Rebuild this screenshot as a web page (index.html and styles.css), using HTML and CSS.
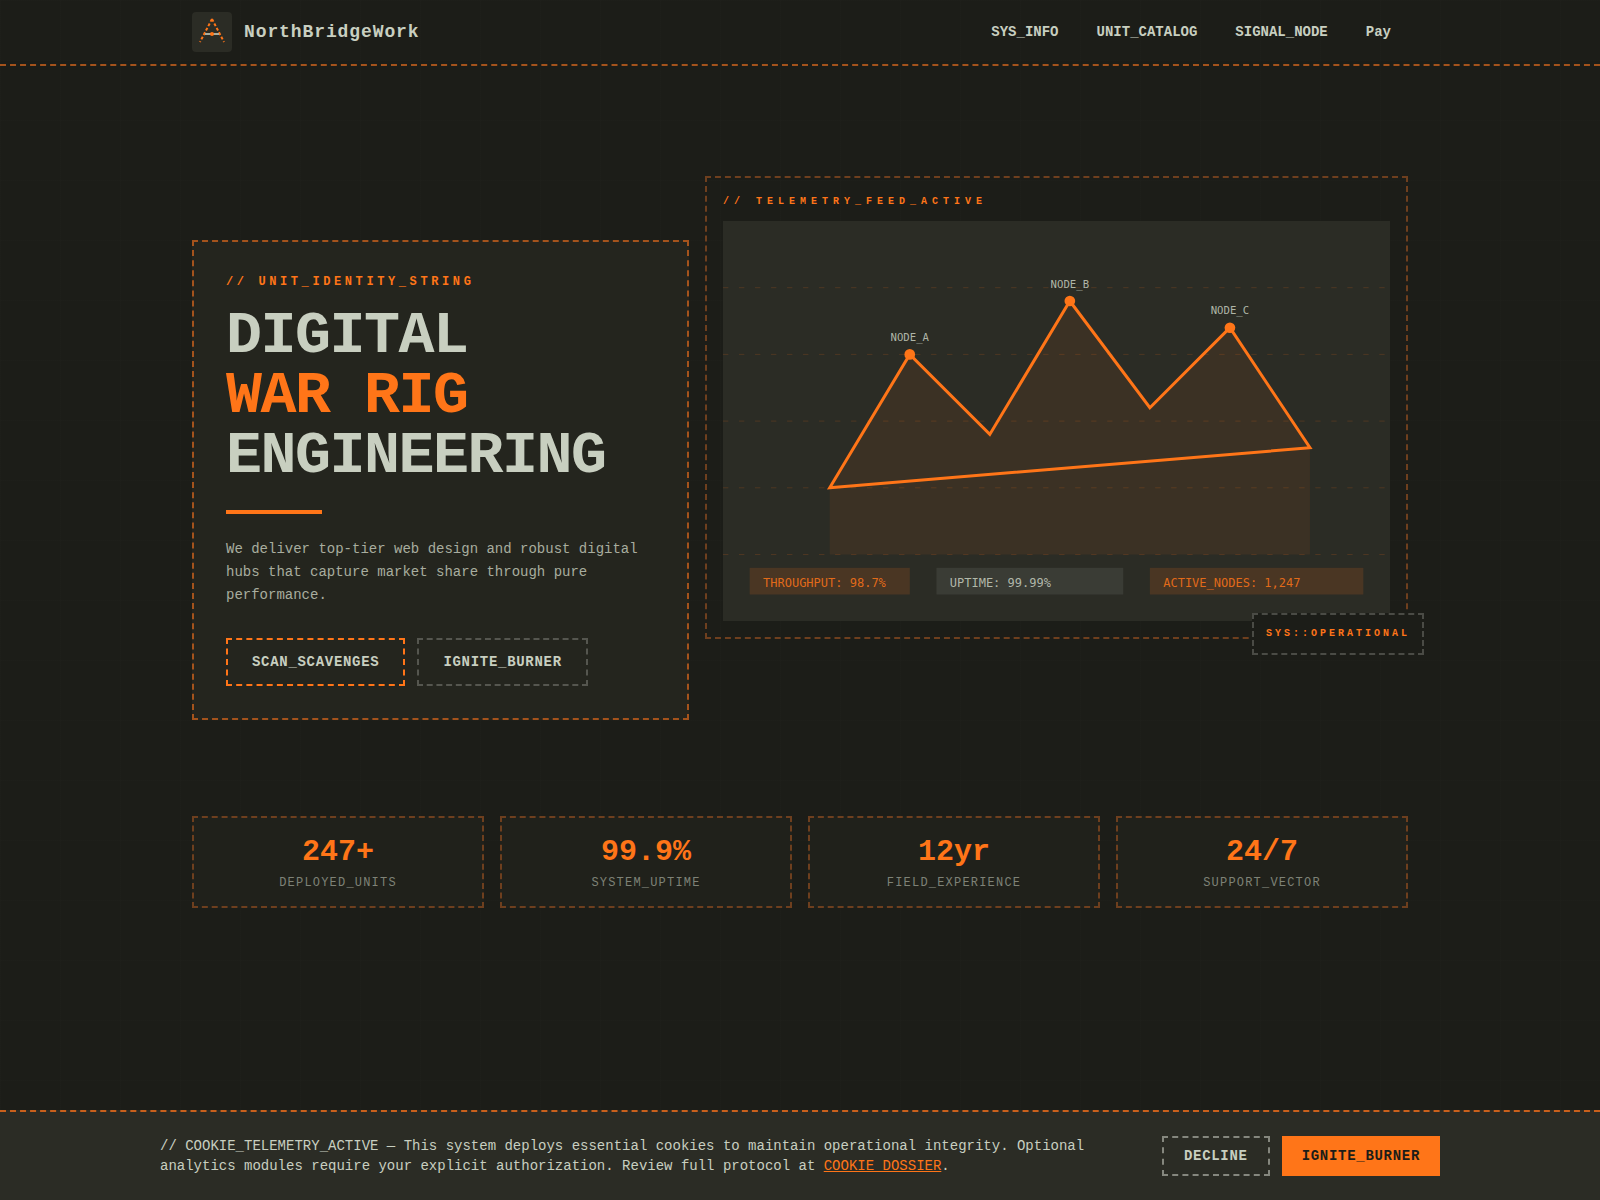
FILE: index.html
```html
<!DOCTYPE html>
<html lang="en">
<head>
    <meta charset="UTF-8">
    <title>NorthBridgeWork</title>
    <link rel="stylesheet" href="styles.css">
</head>
<body>
    <header class="site-header">
        <div class="header-inner">
            <a class="brand" href="#">
                <span class="brand-mark">
                    <svg width="32" height="32" viewBox="0 0 32 32" fill="none">
                        <path d="M16 3 L4 26 M16 3 L28 26" stroke="#ff7518" stroke-width="2" stroke-dasharray="3 2"/>
                        <path d="M9 18 L23 18" stroke="#a8ad9f" stroke-width="2"/>
                        <circle cx="16" cy="18" r="2" fill="#ff7518"/>
                    </svg>
                </span>
                <span class="brand-name">NorthBridgeWork</span>
            </a>
            <nav class="main-nav">
                <a href="#">SYS_INFO</a>
                <a href="#">UNIT_CATALOG</a>
                <a href="#">SIGNAL_NODE</a>
                <a href="#">Pay</a>
            </nav>
        </div>
    </header>

    <main class="page">
        <section class="hero">
            <div class="hero-copy">
                <p class="eyebrow">// UNIT_IDENTITY_STRING</p>
                <h1>DIGITAL<br><span class="accent">WAR RIG</span><br>ENGINEERING</h1>
                <div class="rule"></div>
                <p class="lede">We deliver top-tier web design and robust digital hubs that capture market share through pure performance.</p>
                <div class="hero-actions">
                    <a class="btn btn-orange" href="#">SCAN_SCAVENGES</a>
                    <a class="btn btn-grey" href="#">IGNITE_BURNER</a>
                </div>
            </div>
            <div class="telemetry">
                <p class="telemetry-label">// TELEMETRY_FEED_ACTIVE</p>
                <svg class="chart" viewBox="0 0 500 300">
                    <g class="grid-lines">
                        <line x1="0" y1="50" x2="500" y2="50"/>
                        <line x1="0" y1="100" x2="500" y2="100"/>
                        <line x1="0" y1="150" x2="500" y2="150"/>
                        <line x1="0" y1="200" x2="500" y2="200"/>
                        <line x1="0" y1="250" x2="500" y2="250"/>
                    </g>
                    <polygon class="area" points="80,200 140,100 200,160 260,60 320,140 380,80 440,170 440,250 80,250"/>
                    <polygon class="trace" points="80,200 140,100 200,160 260,60 320,140 380,80 440,170"/>
                    <circle class="node" cx="140" cy="100" r="4"/>
                    <circle class="node" cx="260" cy="60" r="4"/>
                    <circle class="node" cx="380" cy="80" r="4"/>
                    <text class="node-label" x="140" y="90">NODE_A</text>
                    <text class="node-label" x="260" y="50">NODE_B</text>
                    <text class="node-label" x="380" y="70">NODE_C</text>
                    <rect class="chip-orange" x="20" y="260" width="120" height="20"/>
                    <text class="chip-text-orange" x="30" y="274">THROUGHPUT: 98.7%</text>
                    <rect class="chip-grey" x="160" y="260" width="140" height="20"/>
                    <text class="chip-text-grey" x="170" y="274">UPTIME: 99.99%</text>
                    <rect class="chip-orange" x="320" y="260" width="160" height="20"/>
                    <text class="chip-text-orange" x="330" y="274">ACTIVE_NODES: 1,247</text>
                </svg>
                <div class="status-badge">SYS::OPERATIONAL</div>
            </div>
        </section>

        <section class="stats">
            <div class="stat">
                <div class="stat-value">247+</div>
                <div class="stat-label">DEPLOYED_UNITS</div>
            </div>
            <div class="stat">
                <div class="stat-value">99.9%</div>
                <div class="stat-label">SYSTEM_UPTIME</div>
            </div>
            <div class="stat">
                <div class="stat-value">12yr</div>
                <div class="stat-label">FIELD_EXPERIENCE</div>
            </div>
            <div class="stat">
                <div class="stat-value">24/7</div>
                <div class="stat-label">SUPPORT_VECTOR</div>
            </div>
        </section>
    </main>

    <div class="cookie-bar">
        <div class="cookie-inner">
            <p class="cookie-text">// COOKIE_TELEMETRY_ACTIVE — This system deploys essential cookies to maintain operational integrity. Optional analytics modules require your explicit authorization. Review full protocol at <a href="#">COOKIE_DOSSIER</a>.</p>
            <div class="cookie-actions">
                <button class="cookie-decline">DECLINE</button>
                <button class="cookie-accept">IGNITE_BURNER</button>
            </div>
        </div>
    </div>
</body>
</html>
```

FILE: styles.css
```css
* {
    box-sizing: border-box;
}
body {
    margin: 0;
    min-height: 1200px;
    background-color: #1c1d18;
    background-image:
        linear-gradient(90deg, rgba(200, 207, 192, 0.008) 1px, transparent 1px),
        linear-gradient(rgba(200, 207, 192, 0.008) 1px, transparent 1px);
    background-size: 60px 60px;
    color: #c8cfc0;
    font-family: "Liberation Mono", monospace;
}
a {
    color: inherit;
    text-decoration: none;
}
p {
    margin: 0;
}
.site-header {
    border-bottom: 2px dashed #a4531c;
}
.header-inner {
    max-width: 1280px;
    margin: 0 auto;
    padding: 12px 32px;
    display: flex;
    justify-content: space-between;
    align-items: center;
}
.brand {
    display: flex;
    align-items: center;
    gap: 12px;
}
.brand-mark {
    width: 40px;
    height: 40px;
    background-color: #2b2c25;
    border-radius: 4px;
    display: flex;
    align-items: center;
    justify-content: center;
}
.brand-name {
    font-size: 18px;
    font-weight: 700;
    letter-spacing: 0.05em;
}
.main-nav {
    display: flex;
    gap: 6px;
    margin-right: 1px;
}
.main-nav a {
    padding: 8px 16px;
    font-size: 14px;
    font-weight: 700;
}
.page {
    max-width: 1280px;
    margin: 0 auto;
    padding: 110px 32px 0;
}
.hero {
    display: grid;
    grid-template-columns: 497px 703px;
    gap: 16px;
    align-items: start;
}
.hero-copy {
    margin-top: 64px;
    background-color: #24251e;
    border: 2px dashed #a4531c;
    padding: 32px;
}
.eyebrow {
    font-size: 12px;
    line-height: 16px;
    font-weight: 700;
    letter-spacing: 0.3em;
    color: #ff7518;
    margin-bottom: 16px;
}
h1 {
    margin: 0;
    font-size: 60px;
    line-height: 1;
    font-weight: 700;
    letter-spacing: -0.025em;
}
.accent {
    color: #ff7518;
}
.rule {
    width: 96px;
    height: 4px;
    background-color: #ff7518;
    margin: 24px 0;
}
.lede {
    font-size: 14px;
    line-height: 23px;
    color: #a8ad9f;
    margin-bottom: 31px;
}
.hero-actions {
    display: flex;
    gap: 12px;
}
.btn {
    padding: 14px 24px;
    font-size: 14px;
    line-height: 16px;
    font-weight: 700;
    letter-spacing: 0.05em;
}
.btn-orange {
    border: 2px dashed #ff7518;
}
.btn-grey {
    border: 2px dashed #55564f;
}
.telemetry {
    position: relative;
    border: 2px dashed #6e3f1e;
    padding: 16px;
}
.telemetry-label {
    font-size: 10px;
    line-height: 15px;
    font-weight: 700;
    letter-spacing: 0.5em;
    color: #ff7518;
    margin-bottom: 12px;
}
.chart {
    display: block;
    width: 100%;
    background-color: #2b2c25;
    font-family: "DejaVu Sans Mono", monospace;
}
.grid-lines line {
    stroke: #ff7518;
    stroke-opacity: 0.25;
    stroke-width: 0.5;
    stroke-dasharray: 4 8;
}
.area {
    fill: #ff7518;
    fill-opacity: 0.08;
}
.trace {
    fill: none;
    stroke: #ff7518;
    stroke-width: 2.25;
}
.node {
    fill: #ff7518;
}
.node-label {
    font-size: 8px;
    fill: #c8cfc0;
    fill-opacity: 0.85;
    text-anchor: middle;
}
.chip-orange {
    fill: #ff7518;
    fill-opacity: 0.15;
}
.chip-grey {
    fill: #c8cfc0;
    fill-opacity: 0.1;
}
.chip-text-orange {
    font-size: 9px;
    fill: #ff7518;
    fill-opacity: 0.85;
}
.chip-text-grey {
    font-size: 9px;
    fill: #c8cfc0;
    fill-opacity: 0.85;
}
.status-badge {
    position: absolute;
    right: -18px;
    bottom: -18px;
    padding: 12px;
    background-color: #1c1d18;
    border: 2px dashed #4a4b45;
    color: #ff7518;
    font-size: 10px;
    line-height: 14px;
    font-weight: 700;
    letter-spacing: 0.3em;
}
.stats {
    display: grid;
    grid-template-columns: repeat(4, 1fr);
    gap: 16px;
    margin-top: 96px;
}
.stat {
    border: 2px dashed #6e3f1e;
    background-color: #20211b;
    padding: 16px 16px 15px;
    text-align: center;
}
.stat-value {
    font-size: 30px;
    line-height: 36px;
    font-weight: 700;
    color: #ff7518;
}
.stat-label {
    margin-top: 5px;
    font-size: 12px;
    line-height: 16px;
    letter-spacing: 0.1em;
    color: #7e8277;
}
.cookie-bar {
    position: fixed;
    left: 0;
    right: 0;
    bottom: 0;
    background-color: #2b2c25;
    border-top: 2px dashed #c9601c;
    padding: 24px 0;
}
.cookie-inner {
    max-width: 1280px;
    margin: 0 auto;
    display: flex;
    justify-content: space-between;
    align-items: center;
    gap: 32px;
}
.cookie-text {
    font-size: 14px;
    line-height: 20px;
    max-width: 950px;
}
.cookie-text a {
    color: #ff7518;
    text-decoration: underline;
}
.cookie-actions {
    display: flex;
    gap: 12px;
    flex-shrink: 0;
}
.cookie-actions button {
    font-family: "Liberation Mono", monospace;
    font-size: 14px;
    line-height: 16px;
    font-weight: 700;
    letter-spacing: 0.05em;
    cursor: pointer;
}
.cookie-decline {
    padding: 10px 20px;
    background: none;
    border: 2px dashed #85877e;
    color: #c8cfc0;
}
.cookie-accept {
    padding: 12px 20px;
    background-color: #ff7518;
    border: none;
    color: #1c1d18;
}
```
